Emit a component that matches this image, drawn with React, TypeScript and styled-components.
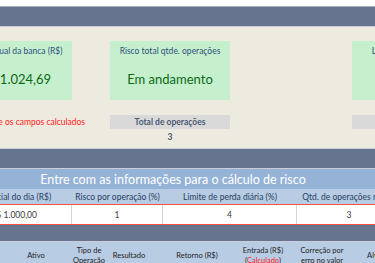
import React from "react";
import styled, { createGlobalStyle } from "styled-components";

const Global = createGlobalStyle`
  html, body { margin: 0; padding: 0; background: #ffffff; }
  body { width: 375px; height: 263px; overflow: hidden; font-family: Lato, "Open Sans", sans-serif; }
  #root { width: 375px; overflow: hidden; }
`;

const Sheet = styled.div`
  width: 560px;
  margin-left: -55px;
`;

const TopStrip = styled.div`
  height: 6px;
  background: #ffffff;
  border-bottom: 1px solid #a6adbb;
`;

const Band = styled.div<{ $h: number }>`
  height: ${(p) => p.$h}px;
  background: #66748f;
  border-bottom: 1px solid #c9ced7;
`;

const Dashboard = styled.div`
  height: 122px;
  background: #edeae0;
  padding: 14px 0 0 7px;
  box-sizing: border-box;
  border-bottom: 1px solid #c9ced7;
`;

const Row = styled.div`
  display: flex;
  align-items: flex-start;
`;

const Card = styled.div<{ $gap: number; $w?: number; $indent?: number }>`
  width: ${(p) => p.$w ?? 120}px;
  height: 59px;
  margin-left: ${(p) => p.$indent ?? 0}px;
  margin-right: ${(p) => p.$gap}px;
  background: #c6efce;
  display: flex;
  flex-direction: column;
  align-items: center;
  flex-shrink: 0;
`;

const CardLabel = styled.div`
  margin-top: 4px;
  font-size: 8.5px;
  line-height: 12px;
  color: #2d4f7c;
  white-space: nowrap;
`;

const CardValue = styled.div`
  flex: 1;
  display: flex;
  align-items: center;
  font-size: 13px;
  color: #0b6b12;
  white-space: nowrap;
`;

const SecondRow = styled(Row)`
  margin-top: 15px;
`;

const Note = styled.div`
  width: 133px;
  margin-right: 25px;
  height: 14px;
  display: flex;
  align-items: center;
  justify-content: flex-end;
  font-size: 8.5px;
  color: #ff1a1a;
  white-space: nowrap;
  flex-shrink: 0;
`;

const Stat = styled.div<{ $gap: number }>`
  width: 120px;
  margin-right: ${(p) => p.$gap}px;
  display: flex;
  flex-direction: column;
  align-items: center;
  flex-shrink: 0;
`;

const StatLabel = styled.div`
  width: 100%;
  height: 14px;
  background: #d9d9d9;
  display: flex;
  align-items: center;
  justify-content: center;
  font-size: 8.5px;
  font-weight: 700;
  color: #4a5a72;
  white-space: nowrap;
`;

const StatValue = styled.div`
  height: 16px;
  display: flex;
  align-items: center;
  font-size: 8.5px;
  font-weight: 700;
  color: #4a5a72;
`;

const Title = styled.div`
  width: 456px;
  height: 20px;
  background: #95b3d7;
  display: flex;
  align-items: center;
  justify-content: center;
  color: #ffffff;
  font-size: 12.5px;
  white-space: nowrap;
`;

const Grid = styled.div<{ $cols: string }>`
  display: grid;
  grid-template-columns: ${(p) => p.$cols};
  width: max-content;
`;

const HeadCell = styled.div`
  height: 15px;
  background: #b8cce4;
  display: flex;
  align-items: center;
  justify-content: center;
  font-size: 8.5px;
  color: #253f63;
  white-space: nowrap;
`;

const InputRow = styled(Grid)`
  border-top: 1px solid #f2553f;
  border-bottom: 1px solid #f2553f;
  background: #ffffff;
`;

const InputCell = styled.div<{ $last?: boolean; $pad?: number }>`
  height: 19px;
  display: flex;
  align-items: center;
  justify-content: center;
  padding-left: ${(p) => p.$pad ?? 0}px;
  font-size: 8.5px;
  color: #3a3a3a;
  border-right: ${(p) => (p.$last ? "none" : "1px solid #d4d4d4")};
  white-space: nowrap;
`;

const TableHead = styled(Grid)`
  background: #b8cce4;
  height: 28px;
`;

const ColHead = styled.div`
  display: flex;
  align-items: center;
  justify-content: center;
  overflow: visible;
`;

const ColText = styled.div`
  text-align: center;
  font-size: 7.5px;
  line-height: 10px;
  color: #1e1e1e;
  white-space: nowrap;
`;

const Red = styled.span`
  color: #ff1a1a;
`;

const inputCols = "127px 91px 134px 104px";
const tableCols = "55px 72px 34px 46px 90px 42px 76px 44px";

export default function App() {
  return (
    <>
      <Global />
      <Sheet>
        <TopStrip />
        <Band $h={19} />
        <Dashboard>
          <Row>
            <Card $gap={38} $w={112} $indent={8}>
              <CardLabel>Saldo atual da banca (R$)</CardLabel>
              <CardValue>R$ 1.024,69</CardValue>
            </Card>
            <Card $gap={122}>
              <CardLabel>Risco total qtde. operações</CardLabel>
              <CardValue>Em andamento</CardValue>
            </Card>
            <Card $gap={0}>
              <CardLabel>Limite de perda diária</CardLabel>
              <CardValue></CardValue>
            </Card>
          </Row>
          <SecondRow>
            <Note>Não altere os campos calculados</Note>
            <Stat $gap={122}>
              <StatLabel>Total de operações</StatLabel>
              <StatValue>3</StatValue>
            </Stat>
            <Stat $gap={0}>
              <StatLabel>Resultado do dia</StatLabel>
              <StatValue></StatValue>
            </Stat>
          </SecondRow>
        </Dashboard>
        <Band $h={19} />
        <Title>Entre com as informações para o cálculo de risco</Title>
        <Grid $cols={inputCols}>
          <HeadCell>Saldo inicial do dia (R$)</HeadCell>
          <HeadCell>Risco por operação (%)</HeadCell>
          <HeadCell>Limite de perda diária (%)</HeadCell>
          <HeadCell>Qtd. de operações no dia</HeadCell>
        </Grid>
        <InputRow $cols={inputCols}>
          <InputCell $pad={12}>R$ 1.000,00</InputCell>
          <InputCell>1</InputCell>
          <InputCell>4</InputCell>
          <InputCell $last>3</InputCell>
        </InputRow>
        <Band $h={16} />
        <TableHead $cols={tableCols}>
          <ColHead />
          <ColHead>
            <ColText>Ativo</ColText>
          </ColHead>
          <ColHead>
            <ColText>
              Tipo de
              <br />
              Operação
            </ColText>
          </ColHead>
          <ColHead>
            <ColText>Resultado</ColText>
          </ColHead>
          <ColHead>
            <ColText>Retorno (R$)</ColText>
          </ColHead>
          <ColHead>
            <ColText>
              Entrada (R$)
              <br />
              (<Red>Calculado</Red>)
            </ColText>
          </ColHead>
          <ColHead>
            <ColText>
              Correção por
              <br />
              erro no valor
            </ColText>
          </ColHead>
          <ColHead>
            <ColText>Alvo (R$)</ColText>
          </ColHead>
        </TableHead>
      </Sheet>
    </>
  );
}
